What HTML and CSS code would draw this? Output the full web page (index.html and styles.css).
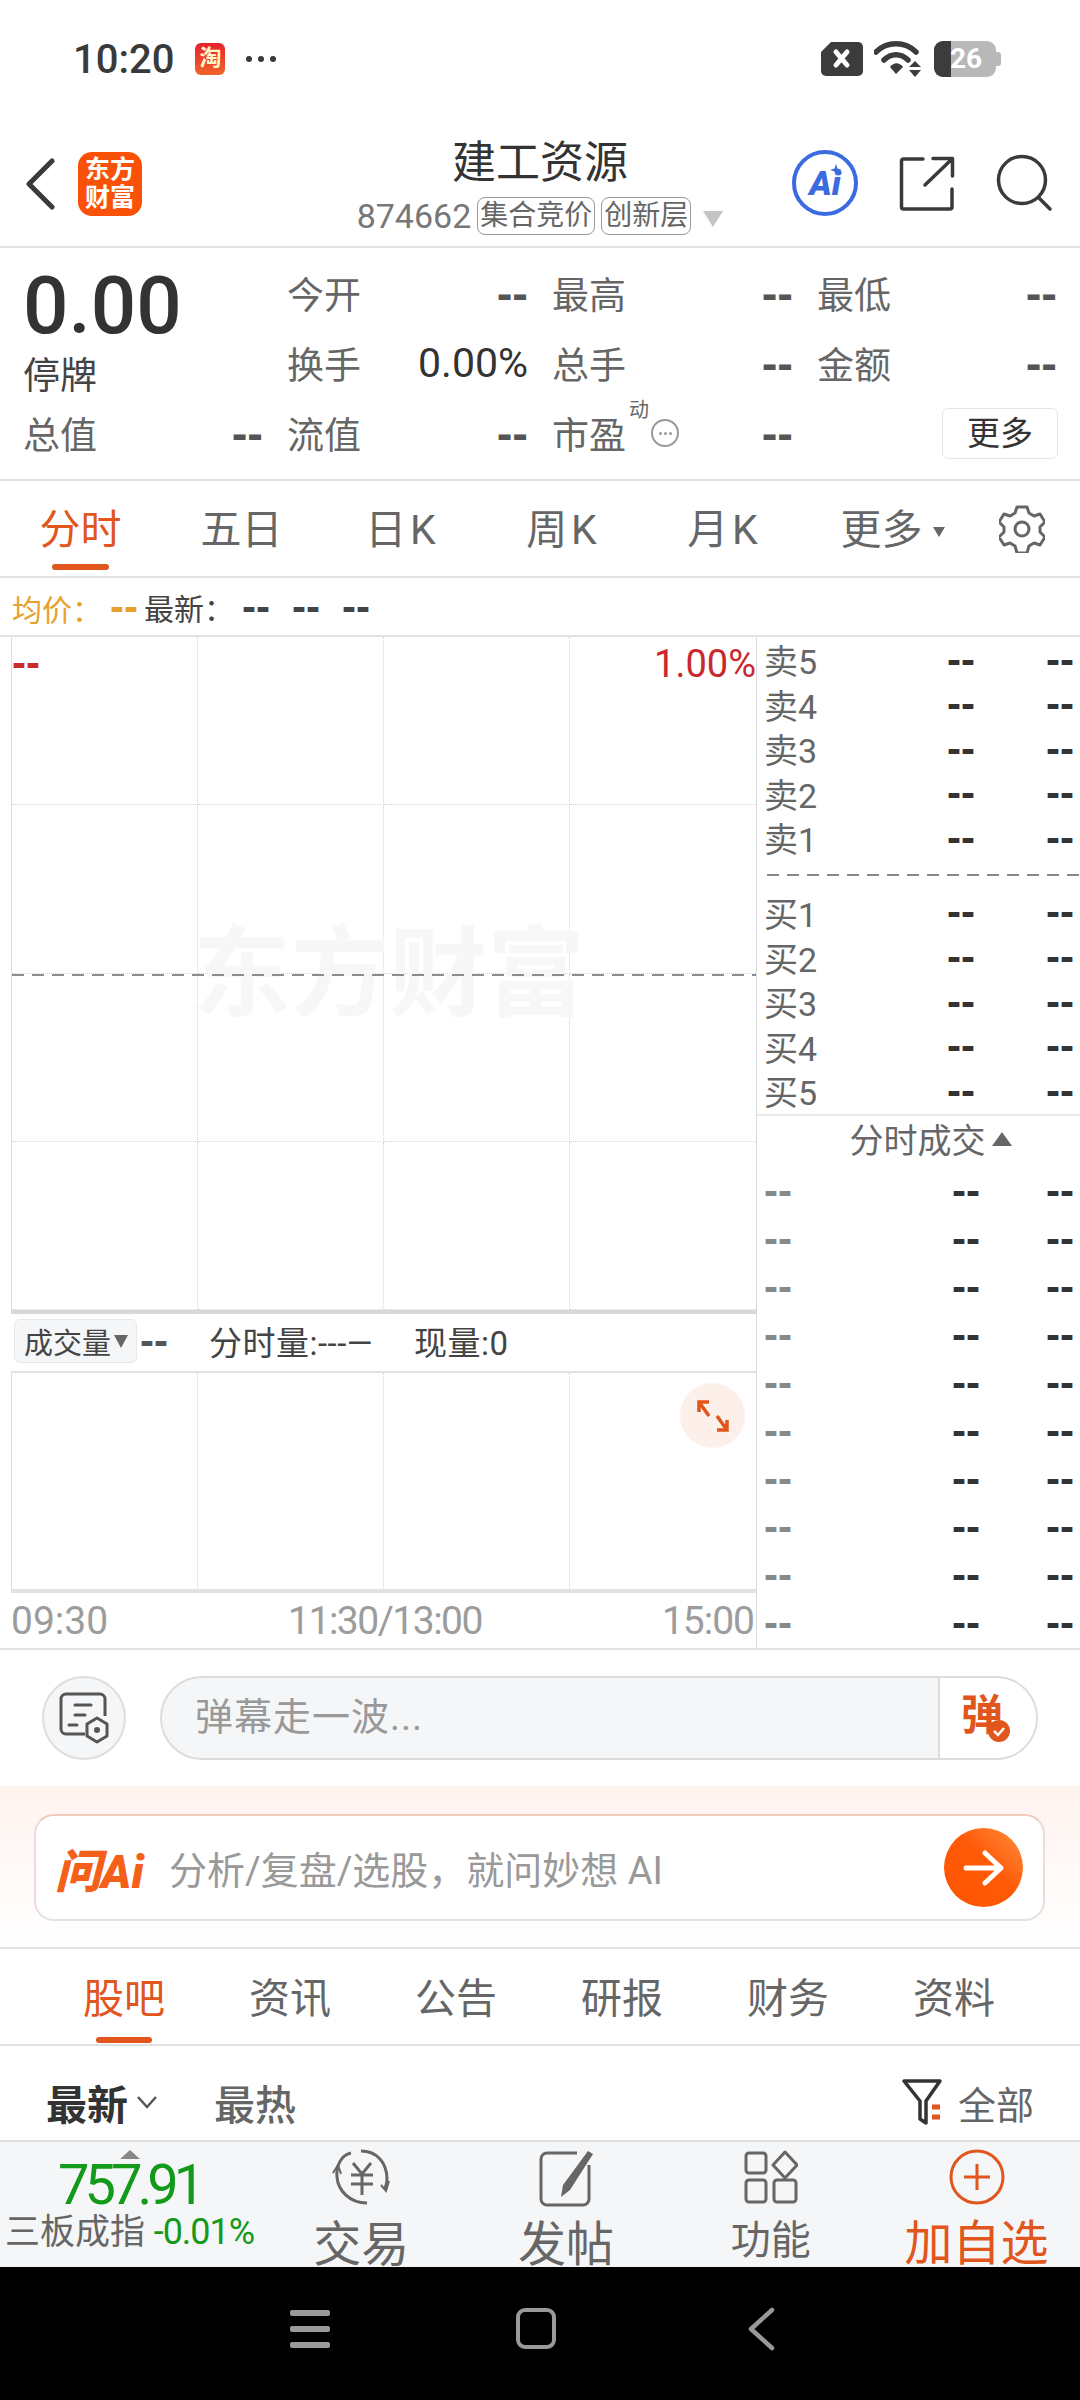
FILE: index.html
```html
<!DOCTYPE html>
<html lang="zh-CN">
<head>
<meta charset="UTF-8">
<meta name="viewport" content="width=device-width, initial-scale=1.0">
<title>建工资源</title>
<link rel="stylesheet" href="styles.css">
</head>
<body>

<div class="status-bar">
    <div class="status-left">
        <span class="clock">10:20</span>
        <span class="tao-icon">淘</span>
        <span class="status-dots"><i></i><i></i><i></i></span>
    </div>
    <div class="status-right">
        <svg width="44" height="36" viewBox="0 0 44 36"><path d="M11 1H38a5 5 0 0 1 5 5V30a5 5 0 0 1-5 5H6a5 5 0 0 1-5-5V11z" fill="#3c3c3c"/><path d="M16 11l11 13M27 11L16 24" stroke="#fff" stroke-width="5" stroke-linecap="round"/></svg>
        <svg width="48" height="36" viewBox="0 0 48 36"><path d="M2 11C13 0 31 0 42 11" fill="none" stroke="#3c3c3c" stroke-width="5.5" stroke-linecap="round"/><path d="M10 19C17 12 27 12 34 19" fill="none" stroke="#3c3c3c" stroke-width="5.5" stroke-linecap="round"/><path d="M16 26C20 21 25 21 29 26L22 33z" fill="#3c3c3c"/><path d="M41 20l6 6H35zM41 36l6-7H35z" fill="#3c3c3c"/></svg>
        <span class="battery"><span class="battery-dark"></span><span class="battery-num">26</span><span class="battery-cap"></span></span>
    </div>
</div>

<div class="header">
    <div class="header-left">
        <svg width="30" height="52" viewBox="0 0 30 52"><path d="M27 3L4 26l23 23" fill="none" stroke="#3a3a3a" stroke-width="5" stroke-linecap="round" stroke-linejoin="round"/></svg>
        <div class="app-logo">东方<br>财富</div>
    </div>
    <div class="header-mid">
        <div class="stock-name">建工资源</div>
        <div class="stock-sub">
            <span class="stock-code">874662</span>
            <span class="sub-chip">集合竞价</span>
            <span class="sub-chip">创新层</span>
            <span class="sub-arrow"></span>
        </div>
    </div>
    <div class="header-right">
        <div class="ai-badge"><span>Ai</span><svg class="ai-star" width="12" height="12" viewBox="0 0 12 12"><path d="M6 0l1.500 4.500L12 6 7.500 7.500 6 12 4.500 7.500 0 6l4.500-1.500z" fill="#3b6be0"/></svg></div>
        <svg class="share-icon" width="56" height="56" viewBox="0 0 56 56"><path d="M24 4H4.500a2 2 0 0 0-2 2V52a2 2 0 0 0 2 2H51a2 2 0 0 0 2-2V34" fill="none" stroke="#3a3a3a" stroke-width="3.500" stroke-linecap="round"/><path d="M26 30L53 4M34 3.500H53.500V21" fill="none" stroke="#3a3a3a" stroke-width="3.500" stroke-linecap="round" stroke-linejoin="round"/></svg>
        <svg width="58" height="58" viewBox="0 0 58 58"><circle cx="26" cy="26" r="23.500" fill="none" stroke="#3a3a3a" stroke-width="3.500"/><path d="M43 44l11 11" stroke="#3a3a3a" stroke-width="3.500" stroke-linecap="round"/></svg>
    </div>
</div>

<div class="quote">
    <div class="quote-price">
        <div class="price">0.00</div>
        <div class="price-state">停牌</div>
    </div>
    <div class="cell"><span>今开</span><b>--</b></div>
    <div class="cell"><span>最高</span><b>--</b></div>
    <div class="cell"><span>最低</span><b>--</b></div>
    <div class="cell"><span>换手</span><em>0.00%</em></div>
    <div class="cell"><span>总手</span><b>--</b></div>
    <div class="cell"><span>金额</span><b>--</b></div>
    <div class="cell"><span>总值</span><b>--</b></div>
    <div class="cell"><span>流值</span><b>--</b></div>
    <div class="cell">
        <span class="pe-label">市盈<sup>动</sup><i class="pe-more"><u></u><u></u><u></u></i></span><b>--</b>
    </div>
    <div class="cell"><span class="more-btn">更多</span></div>
</div>

<div class="chart-tabs">
    <div class="chart-tab active">分时</div>
    <div class="chart-tab">五日</div>
    <div class="chart-tab k-tab">日K</div>
    <div class="chart-tab k-tab">周K</div>
    <div class="chart-tab k-tab">月K</div>
    <div class="chart-tab tab-more">更多<span class="tab-arrow"></span></div>
    <svg class="gear" width="46" height="48" viewBox="0 0 46 48"><path d="M18 2h10l2 6 5 3 6-2 5 8-5 5v5l5 5-5 8-6-2-5 3-2 7H18l-2-7-5-3-6 2-5-8 5-5v-5l-5-5 5-8 6 2 5-3z" fill="none" stroke="#666" stroke-width="3" stroke-linejoin="round"/><circle cx="23" cy="24" r="7" fill="none" stroke="#666" stroke-width="3"/></svg>
</div>

<div class="info-row">
    <span class="avg">均价：<b>--</b></span>
    <span class="latest">最新：</span>
    <b>--</b><b>--</b><b>--</b>
</div>

<div class="chart-body">
    <div class="chart-left">
        <div class="plot plot-main">
            <div class="plot-cell"></div><div class="plot-cell"></div><div class="plot-cell"></div><div class="plot-cell"></div>
            <div class="plot-cell"></div><div class="plot-cell"></div><div class="plot-cell"></div><div class="plot-cell"></div>
            <div class="plot-cell"></div><div class="plot-cell"></div><div class="plot-cell"></div><div class="plot-cell"></div>
            <div class="plot-cell"></div><div class="plot-cell"></div><div class="plot-cell"></div><div class="plot-cell"></div>
            <div class="watermark">东方财富</div>
            <div class="mid-line"></div>
            <b class="plot-tl">--</b>
            <span class="plot-tr">1.00%</span>
        </div>
        <div class="vol-row">
            <span class="vol-chip">成交量<i></i></span>
            <b>--</b>
            <span class="vol-text">分时量:---—</span>
            <span class="vol-text">现量:0</span>
        </div>
        <div class="plot plot-vol">
            <div class="plot-cell"></div><div class="plot-cell"></div><div class="plot-cell"></div><div class="plot-cell"></div>
            <div class="expand-btn">
                <svg width="34" height="34" viewBox="0 0 34 34"><path d="M3 13V3H13M3 3l10 14M31 21V31H21M31 31L21 17" fill="none" stroke="#e0561c" stroke-width="3.500"/></svg>
            </div>
        </div>
        <div class="time-row"><span>09:30</span><span>11:30/13:00</span><span>15:00</span></div>
    </div>

    <div class="chart-right">
        <div class="book book-sell">
            <div class="book-row"><span>卖5</span><b>--</b><b>--</b></div>
            <div class="book-row"><span>卖4</span><b>--</b><b>--</b></div>
            <div class="book-row"><span>卖3</span><b>--</b><b>--</b></div>
            <div class="book-row"><span>卖2</span><b>--</b><b>--</b></div>
            <div class="book-row"><span>卖1</span><b>--</b><b>--</b></div>
        </div>
        <div class="book-split"></div>
        <div class="book">
            <div class="book-row"><span>买1</span><b>--</b><b>--</b></div>
            <div class="book-row"><span>买2</span><b>--</b><b>--</b></div>
            <div class="book-row"><span>买3</span><b>--</b><b>--</b></div>
            <div class="book-row"><span>买4</span><b>--</b><b>--</b></div>
            <div class="book-row"><span>买5</span><b>--</b><b>--</b></div>
        </div>
        <div class="trade-title">分时成交<i></i></div>
        <div class="trades">
            <div class="trade-row"><b class="t-time">--</b><b>--</b><b>--</b></div>
            <div class="trade-row"><b class="t-time">--</b><b>--</b><b>--</b></div>
            <div class="trade-row"><b class="t-time">--</b><b>--</b><b>--</b></div>
            <div class="trade-row"><b class="t-time">--</b><b>--</b><b>--</b></div>
            <div class="trade-row"><b class="t-time">--</b><b>--</b><b>--</b></div>
            <div class="trade-row"><b class="t-time">--</b><b>--</b><b>--</b></div>
            <div class="trade-row"><b class="t-time">--</b><b>--</b><b>--</b></div>
            <div class="trade-row"><b class="t-time">--</b><b>--</b><b>--</b></div>
            <div class="trade-row"><b class="t-time">--</b><b>--</b><b>--</b></div>
            <div class="trade-row"><b class="t-time">--</b><b>--</b><b>--</b></div>
        </div>
    </div>
</div>

<div class="danmu-row">
    <div class="danmu-set">
        <svg width="50" height="52" viewBox="0 0 50 52"><path d="M26 42H7a5 5 0 0 1-5-5V7a5 5 0 0 1 5-5H41a5 5 0 0 1 5 5V24" fill="none" stroke="#555" stroke-width="3"/><path d="M16 13H32M16 23H26M10 33H18" stroke="#555" stroke-width="3" stroke-linecap="round"/><path d="M38 26l10 6V44l-10 6-10-6V32z" fill="#f5f6f8" stroke="#555" stroke-width="3" stroke-linejoin="round"/><circle cx="38" cy="38" r="3" fill="#555"/></svg>
    </div>
    <div class="danmu-input">
        <span class="danmu-text">弹幕走一波...</span>
        <span class="danmu-send">弹<svg class="danmu-check" width="22" height="22" viewBox="0 0 22 22"><circle cx="11" cy="11" r="11" fill="#e0561c"/><path d="M6 11l4 4 6-7" fill="none" stroke="#fff" stroke-width="2.500"/></svg></span>
    </div>
</div>

<div class="ask-wrap">
    <div class="ask-card">
        <span class="ask-logo">问Ai</span>
        <span class="ask-text">分析/复盘/选股，就问妙想 AI</span>
        <span class="ask-go"><svg width="42" height="36" viewBox="0 0 42 36"><path d="M3 18H37M22 3l16 15-16 15" fill="none" stroke="#fff" stroke-width="5" stroke-linecap="round" stroke-linejoin="round"/></svg></span>
    </div>
</div>

<div class="news-tabs">
    <div class="news-tab active">股吧</div>
    <div class="news-tab">资讯</div>
    <div class="news-tab">公告</div>
    <div class="news-tab">研报</div>
    <div class="news-tab">财务</div>
    <div class="news-tab">资料</div>
</div>

<div class="filter-row">
    <span class="sort on">最新<svg width="22" height="14" viewBox="0 0 22 14"><path d="M2 2l9 10 9-10" fill="none" stroke="#555" stroke-width="2.500"/></svg></span>
    <span class="sort">最热</span>
    <span class="filter-all">
        <svg width="42" height="46" viewBox="0 0 42 46"><path d="M2 2H38L24 22V44L18 40V22z" fill="none" stroke="#333" stroke-width="3.500" stroke-linejoin="round"/><path d="M30 28h8M30 38h8" stroke="#e0561c" stroke-width="5"/></svg>
        全部
    </span>
</div>

<div class="bottom-bar">
    <div class="index-box">
        <span class="index-up"></span>
        <div class="index-num">757.91</div>
        <div class="index-line">三板成指 <span>-0.01%</span></div>
    </div>
    <div class="bar-item big">
        <svg width="60" height="58" viewBox="0 0 60 58"><path d="M20 4C10 6 5 17 6 28c1 13 12 26 30 26M30 2c16 0 26 12 26 28 0 4-1 7-2 10" fill="none" stroke="#666" stroke-width="3"/><path d="M2 24l5-8 3 9M50 36l5 6 3-10" fill="none" stroke="#666" stroke-width="2"/><path d="M22 14l9 11 9-11M20 26H42M20 35H42M31 25V46" fill="none" stroke="#666" stroke-width="3"/></svg>
        <span>交易</span>
    </div>
    <div class="bar-item big">
        <svg width="58" height="58" viewBox="0 0 58 58"><path d="M40 4H10a6 6 0 0 0-6 6V50a6 6 0 0 0 6 6H46a6 6 0 0 0 6-6V16" fill="none" stroke="#666" stroke-width="3"/><path d="M51 2l5 3L33 41l-9 7 2-12z" fill="#666"/></svg>
        <span>发帖</span>
    </div>
    <div class="bar-item small">
        <svg width="54" height="54" viewBox="0 0 54 54"><rect x="2" y="3" width="20" height="20" rx="3" fill="none" stroke="#666" stroke-width="3"/><path d="M41 2l12 13-12 13-12-13z" fill="none" stroke="#666" stroke-width="3" stroke-linejoin="round"/><rect x="2" y="30" width="20" height="22" rx="3" fill="none" stroke="#666" stroke-width="3"/><rect x="30" y="30" width="22" height="22" rx="3" fill="none" stroke="#666" stroke-width="3"/></svg>
        <span>功能</span>
    </div>
    <div class="bar-item add">
        <svg width="56" height="56" viewBox="0 0 56 56"><circle cx="28" cy="28" r="26" fill="none" stroke="#e0561c" stroke-width="3"/><path d="M15 28H41M28 15V41" stroke="#e0561c" stroke-width="3"/></svg>
        <span>加自选</span>
    </div>
</div>

<div class="nav-bar">
    <span class="nav-menu"><i></i><i></i><i></i></span>
    <span class="nav-home"></span>
    <svg width="28" height="44" viewBox="0 0 28 44"><path d="M25 3L4 22l21 19" fill="none" stroke="#999" stroke-width="4.500" stroke-linecap="round" stroke-linejoin="round"/></svg>
</div>

</body>
</html>
```

FILE: styles.css
```css
* {
    box-sizing: border-box;
}
html, body {
    margin: 0;
    padding: 0;
}
body {
    width: 1080px;
    height: 2400px;
    overflow: hidden;
    background-color: #fff;
    color: #333;
    font-family: Roboto, "Noto Sans CJK SC", sans-serif;
}
i, em, u {
    font-style: normal;
    text-decoration: none;
}
/* the "--" placeholders are all <b> */
b {
    font-family: "Liberation Sans", sans-serif;
    font-weight: 700;
}

/* status bar */
.status-bar {
    height: 100px;
    display: flex;
    justify-content: space-between;
    align-items: center;
    padding: 18px 84px 0 73px;
}
.status-left, .status-right {
    display: flex;
    align-items: center;
}
.clock {
    font-size: 40px;
    font-weight: 500;
    color: #3a3a3a;
}
.tao-icon {
    width: 30px;
    height: 32px;
    margin-left: 21px;
    border-radius: 6px;
    background: linear-gradient(#e3232c, #f0642a);
    color: #fff6c8;
    font-size: 22px;
    line-height: 30px;
    text-align: center;
    font-weight: 700;
}
.status-dots {
    display: flex;
    gap: 6px;
    margin-left: 21px;
}
.status-dots i {
    width: 6px;
    height: 6px;
    border-radius: 50%;
    background-color: #3a3a3a;
}
.status-right {
    gap: 10px;
}
.battery {
    position: relative;
    width: 62px;
    height: 36px;
    border-radius: 9px;
    background-color: #b8b8b8;
    margin-left: 2px;
}
.battery-dark {
    position: absolute;
    left: 0;
    top: 0;
    width: 17px;
    height: 36px;
    border-radius: 9px 0 0 9px;
    background-color: #3c3c3c;
}
.battery-num {
    position: absolute;
    left: 16px;
    top: 0;
    color: #fff;
    font-size: 28px;
    line-height: 36px;
    font-weight: 700;
}
.battery-cap {
    position: absolute;
    right: -5px;
    top: 11px;
    width: 5px;
    height: 14px;
    border-radius: 0 3px 3px 0;
    background-color: #b8b8b8;
}

/* header */
.header {
    height: 148px;
    display: grid;
    grid-template-columns: 1fr auto 1fr;
    align-items: center;
    padding-top: 20px;
    border-bottom: 2px solid #e2e2e2;
}
.header-left {
    display: flex;
    align-items: center;
    gap: 23px;
    padding: 2px 0 0 25px;
}
.app-logo {
    width: 64px;
    height: 64px;
    border-radius: 14px;
    background-color: #fa5108;
    color: #fff;
    font-size: 25px;
    line-height: 28px;
    font-weight: 700;
    text-align: center;
    padding-top: 4px;
}
.header-mid {
    text-align: center;
    padding-top: 4px;
}
.stock-name {
    font-size: 44px;
    line-height: 56px;
    color: #333;
}
.stock-sub {
    display: flex;
    align-items: center;
    gap: 6px;
    margin-top: 6px;
    color: #777;
}
.stock-code {
    font-size: 34px;
    line-height: 38px;
}
.sub-chip {
    border: 1px solid #999;
    border-radius: 8px;
    padding: 0 2px;
    font-size: 28px;
    line-height: 36px;
    color: #666;
}
.sub-arrow {
    width: 0;
    height: 0;
    margin: 6px 0 0 6px;
    border-left: 10px solid transparent;
    border-right: 10px solid transparent;
    border-top: 16px solid #c4c4c4;
}
.header-right {
    display: flex;
    justify-content: flex-end;
    align-items: center;
    gap: 44px;
    padding-right: 26px;
}
.share-icon {
    margin: 0 -3px 0 3px;
}
.ai-badge {
    position: relative;
    width: 66px;
    height: 66px;
    border: 4px solid #3b6be0;
    border-radius: 50%;
    color: #3b6be0;
    font-size: 34px;
    line-height: 58px;
    font-weight: 900;
    font-style: italic;
    text-align: center;
    margin-right: -6px;
}
.ai-star {
    position: absolute;
    right: 12px;
    top: 10px;
}

/* quote block */
.quote {
    height: 233px;
    display: grid;
    grid-template-columns: 264px 265px 265px 264px;
    grid-auto-rows: 70px;
    padding: 10px 0 0 23px;
    border-bottom: 2px solid #e2e2e2;
    font-size: 37px;
    color: #666;
}
.quote-price {
    grid-row: span 2;
    padding-top: 10px;
}
.price {
    font-size: 80px;
    font-weight: 500;
    line-height: 76px;
    color: #333;
}
.price-state {
    font-size: 37px;
    line-height: 50px;
    margin-top: 8px;
    color: #444;
}
.cell {
    display: flex;
    justify-content: space-between;
    align-items: center;
    padding-right: 24px;
}
.cell b {
    font-size: 47px;
    line-height: 50px;
    color: #555;
}
.cell em {
    font-size: 41px;
    color: #333;
}
.pe-label {
    position: relative;
    display: flex;
    align-items: center;
}
.pe-label sup {
    position: absolute;
    left: 77px;
    top: -8px;
    font-size: 20px;
    line-height: 24px;
}
.pe-more {
    display: flex;
    align-items: center;
    justify-content: center;
    gap: 2px;
    width: 28px;
    height: 28px;
    margin-left: 25px;
    border: 2px solid #999;
    border-radius: 50%;
}
.pe-more u {
    width: 3px;
    height: 3px;
    border-radius: 50%;
    background-color: #999;
}
.more-btn {
    width: 116px;
    height: 51px;
    margin-left: auto;
    margin-right: -1px;
    border: 1px solid #e4e4e4;
    border-radius: 6px;
    font-size: 33px;
    line-height: 49px;
    text-align: center;
    color: #333;
}

/* chart tabs */
.chart-tabs {
    height: 97px;
    display: flex;
    align-items: center;
    border-bottom: 2px solid #e2e2e2;
    font-size: 41px;
    color: #666;
}
.chart-tab {
    position: relative;
    width: 161px;
    height: 95px;
    line-height: 98px;
    text-align: center;
}
.chart-tab.active {
    color: #e0561c;
}
.chart-tab.active::after {
    content: "";
    position: absolute;
    left: 52px;
    bottom: 6px;
    width: 57px;
    height: 6px;
    border-radius: 3px;
    background-color: #e0561c;
}
.k-tab {
    letter-spacing: 4px;
}
.tab-more {
    padding-left: 14px;
    white-space: nowrap;
}
.tab-arrow {
    display: inline-block;
    width: 0;
    height: 0;
    margin-left: 10px;
    vertical-align: 7px;
    border-left: 6px solid transparent;
    border-right: 6px solid transparent;
    border-top: 10px solid #666;
}
.gear {
    margin-left: 33px;
}

/* info row */
.info-row {
    height: 59px;
    display: flex;
    align-items: center;
    padding-left: 12px;
    border-bottom: 2px solid #e2e2e2;
    font-size: 30px;
    color: #444;
}
.info-row b {
    font-size: 42px;
    line-height: 50px;
    margin-right: 22px;
    color: #444;
}
.avg {
    color: #e8a02c;
}
.avg b {
    color: #e8a02c;
    margin: 0 6px 0 8px;
}
.latest {
    margin-right: 8px;
}

/* chart body */
.chart-body {
    height: 1013px;
    display: flex;
    border-bottom: 2px solid #e2e2e2;
}
.chart-left {
    width: 757px;
    padding-left: 11px;
    border-right: 1px solid #dcdcdc;
}
.chart-right {
    flex: 1;
}
.plot {
    position: relative;
    display: grid;
    grid-template-columns: repeat(4, 1fr);
    border-left: 1px solid #dcdcdc;
}
.plot-main {
    height: 677px;
    grid-template-rows: repeat(4, 1fr);
    border-bottom: 4px solid #d8d8d8;
}
.plot-vol {
    height: 222px;
    border-top: 2px solid #e2e2e2;
    border-bottom: 4px solid #e2e2e2;
}
.plot-cell {
    border-right: 1px dotted #d6d6d6;
    border-bottom: 1px dotted #d6d6d6;
}
.plot-cell:nth-child(4n) {
    border-right: none;
}
.plot-vol .plot-cell {
    border-bottom: none;
}
.watermark {
    position: absolute;
    left: 181px;
    top: 288px;
    font-size: 98px;
    line-height: 100px;
    font-weight: 700;
    color: #f7f7f7;
    white-space: nowrap;
}
.mid-line {
    position: absolute;
    left: 0;
    right: 0;
    top: 337px;
    height: 2px;
    background-image: linear-gradient(90deg, #8c8c8c 60%, transparent 60%);
    background-size: 20px 2px;
}
.plot-tl {
    position: absolute;
    left: 0;
    top: 4px;
    font-size: 42px;
    line-height: 44px;
    color: #cc2c2c;
}
.plot-tr {
    position: absolute;
    right: 0;
    top: 5px;
    font-size: 38px;
    line-height: 44px;
    color: #c8282e;
}
.vol-row {
    height: 57px;
    display: flex;
    align-items: center;
    font-size: 33px;
    color: #444;
    margin-left: -8px;
    padding: 0 0 4px 11px;
}
.vol-row b {
    font-size: 42px;
    line-height: 50px;
    margin-left: 3px;
    color: #555;
}
.vol-chip {
    display: flex;
    align-items: center;
    width: 123px;
    height: 44px;
    padding-left: 9px;
    border: 1px solid #e8e8e8;
    border-radius: 6px;
    background-color: #f5f6f8;
    font-size: 29px;
    margin-top: 1px;
}
.vol-chip i {
    width: 0;
    height: 0;
    margin-left: 3px;
    border-left: 7px solid transparent;
    border-right: 7px solid transparent;
    border-top: 13px solid #666;
}
.vol-text {
    margin-left: 41px;
    letter-spacing: 0.5px;
}
.time-row {
    height: 56px;
    display: flex;
    justify-content: space-between;
    align-items: center;
    padding: 0 2px 0 0;
    font-size: 39px;
    color: #9c9c9c;
}
.time-row span:nth-child(2) {
    letter-spacing: -1.500px;
}
.time-row span:nth-child(3) {
    letter-spacing: -1px;
}
.expand-btn {
    position: absolute;
    right: 11px;
    top: 10px;
    width: 65px;
    height: 65px;
    display: flex;
    align-items: center;
    justify-content: center;
    border-radius: 50%;
    background-color: #fdf0ea;
}

/* order book */
.book-sell {
    margin-top: -2px;
}
.book-row, .trade-row {
    display: grid;
    align-items: center;
    padding: 0 6px 0 7px;
}
.book-row {
    height: 44.6px;
    grid-template-columns: 1fr 99px 99px;
    font-size: 34px;
    color: #666;
}
.book-row b, .trade-row b {
    font-size: 42px;
    line-height: 44px;
    text-align: right;
    color: #333;
}
.book-split {
    height: 30px;
    margin-left: 10px;
    background-image: linear-gradient(90deg, #888 60%, transparent 60%);
    background-size: 20px 2px;
    background-position: 0 16px;
    background-repeat: repeat-x;
}
.trade-title {
    height: 48px;
    margin-top: 3px;
    display: flex;
    align-items: center;
    justify-content: center;
    gap: 6px;
    border-top: 2px solid #e8e8e8;
    font-size: 34px;
    color: #666;
    padding-left: 24px;
}
.trade-title i {
    width: 0;
    height: 0;
    border-left: 10px solid transparent;
    border-right: 10px solid transparent;
    border-bottom: 14px solid #666;
}
.trades {
    margin-top: 5px;
}
.trade-row {
    height: 48px;
    grid-template-columns: 1fr 94px 94px;
}
.trade-row .t-time {
    text-align: left;
    color: #888;
}

/* danmu input */
.danmu-row {
    height: 136px;
    display: flex;
    align-items: center;
    gap: 34px;
    padding-left: 42px;
}
.danmu-set {
    width: 84px;
    height: 84px;
    display: flex;
    align-items: center;
    justify-content: center;
    border: 2px solid #dedede;
    border-radius: 50%;
    background-color: #f5f6f8;
}
.danmu-input {
    width: 878px;
    height: 84px;
    display: flex;
    overflow: hidden;
    border: 2px solid #dcdcdc;
    border-radius: 42px;
    background-color: #f5f6f8;
}
.danmu-text {
    flex: 1;
    padding-left: 33px;
    font-size: 38px;
    line-height: 78px;
    letter-spacing: 1px;
    color: #999;
}
.danmu-send {
    position: relative;
    width: 98px;
    border-left: 2px solid #dcdcdc;
    background-color: #fff;
    color: #e0561c;
    font-size: 42px;
    font-weight: 700;
    line-height: 76px;
    padding-left: 21px;
}
.danmu-check {
    position: absolute;
    left: 48px;
    top: 42px;
}

/* ask ai */
.ask-wrap {
    height: 163px;
    padding: 28px 35px 0 34px;
    border-bottom: 2px solid #e2e2e2;
    background: linear-gradient(#fff3ef, #fff);
}
.ask-card {
    height: 107px;
    display: flex;
    align-items: center;
    padding: 0 20px 0 19px;
    border: 2px solid;
    border-color: #f3c9bc #e8dcdc #dfe3ea;
    border-radius: 20px;
    background-color: #fff;
}
.ask-logo {
    width: 114px;
    font-size: 46px;
    font-weight: 900;
    font-style: italic;
    color: #f4601a;
    white-space: nowrap;
}
.ask-text {
    flex: 1;
    font-size: 38px;
    color: #999;
}
.ask-go {
    width: 79px;
    height: 79px;
    display: flex;
    align-items: center;
    justify-content: center;
    border-radius: 50%;
    background: linear-gradient(45deg, #ff5400, #ff5a08 55%, #ff8f3e);
}

/* news tabs */
.news-tabs {
    height: 97px;
    display: grid;
    grid-template-columns: repeat(6, 166px);
    padding-left: 41px;
    border-bottom: 2px solid #e2e2e2;
    font-size: 41px;
    color: #666;
}
.news-tab {
    position: relative;
    line-height: 100px;
    text-align: center;
}
.news-tab.active {
    color: #e0561c;
}
.news-tab.active::after {
    content: "";
    position: absolute;
    left: 55px;
    bottom: 6px;
    width: 56px;
    height: 6px;
    border-radius: 3px;
    background-color: #e0561c;
}

/* filter */
.filter-row {
    height: 94px;
    display: flex;
    align-items: center;
    padding: 18px 46px 0;
    font-size: 41px;
    color: #666;
}
.sort {
    font-weight: 500;
    margin-right: 56px;
}
.sort.on {
    display: flex;
    align-items: center;
    gap: 8px;
    font-weight: 700;
    color: #333;
}
.filter-all {
    display: flex;
    align-items: center;
    gap: 14px;
    margin-left: auto;
    font-size: 38px;
}

/* bottom bar */
.bottom-bar {
    height: 127px;
    display: flex;
    overflow: hidden;
    border-top: 2px solid #dedede;
    background-color: #f5f6f8;
    color: #666;
}
.index-box {
    position: relative;
    width: 259px;
    padding-left: 5px;
}
.index-up {
    position: absolute;
    left: 120px;
    top: 8px;
    width: 0;
    height: 0;
    border-left: 10px solid transparent;
    border-right: 10px solid transparent;
    border-bottom: 9px solid #888;
}
.index-num {
    margin: 11px 0 0 53px;
    font-size: 56px;
    line-height: 64px;
    letter-spacing: -5px;
    color: #149a1a;
}
.index-line {
    font-size: 35px;
    line-height: 42px;
    white-space: nowrap;
    margin-top: -6px;
}
.index-line span {
    font-size: 36px;
    letter-spacing: -1px;
    color: #149a1a;
}
.bar-item {
    display: flex;
    flex-direction: column;
    align-items: center;
    width: 205px;
    padding-top: 7px;
    line-height: 1;
}
.bar-item svg {
    flex: none;
}
.bar-item span {
    margin-top: 14px;
}
.bar-item.big {
    font-size: 48px;
}
.bar-item.small {
    font-size: 40px;
    padding-top: 8px;
}
.bar-item.small span {
    margin-top: 17px;
}
.bar-item.add {
    width: 207px;
    font-size: 48px;
    color: #e0561c;
}
.bar-item.add span {
    margin-top: 15px;
}

/* system nav */
.nav-bar {
    height: 133px;
    display: flex;
    align-items: center;
    background-color: #000;
    padding: 0 0 10px 290px;
}
.nav-menu {
    display: flex;
    flex-direction: column;
    gap: 10px;
    width: 40px;
}
.nav-menu i {
    height: 6px;
    border-radius: 2px;
    background-color: #999;
}
.nav-home {
    width: 40px;
    height: 41px;
    margin: 0 191px 0 186px;
    border: 4px solid #999;
    border-radius: 9px;
}
```
